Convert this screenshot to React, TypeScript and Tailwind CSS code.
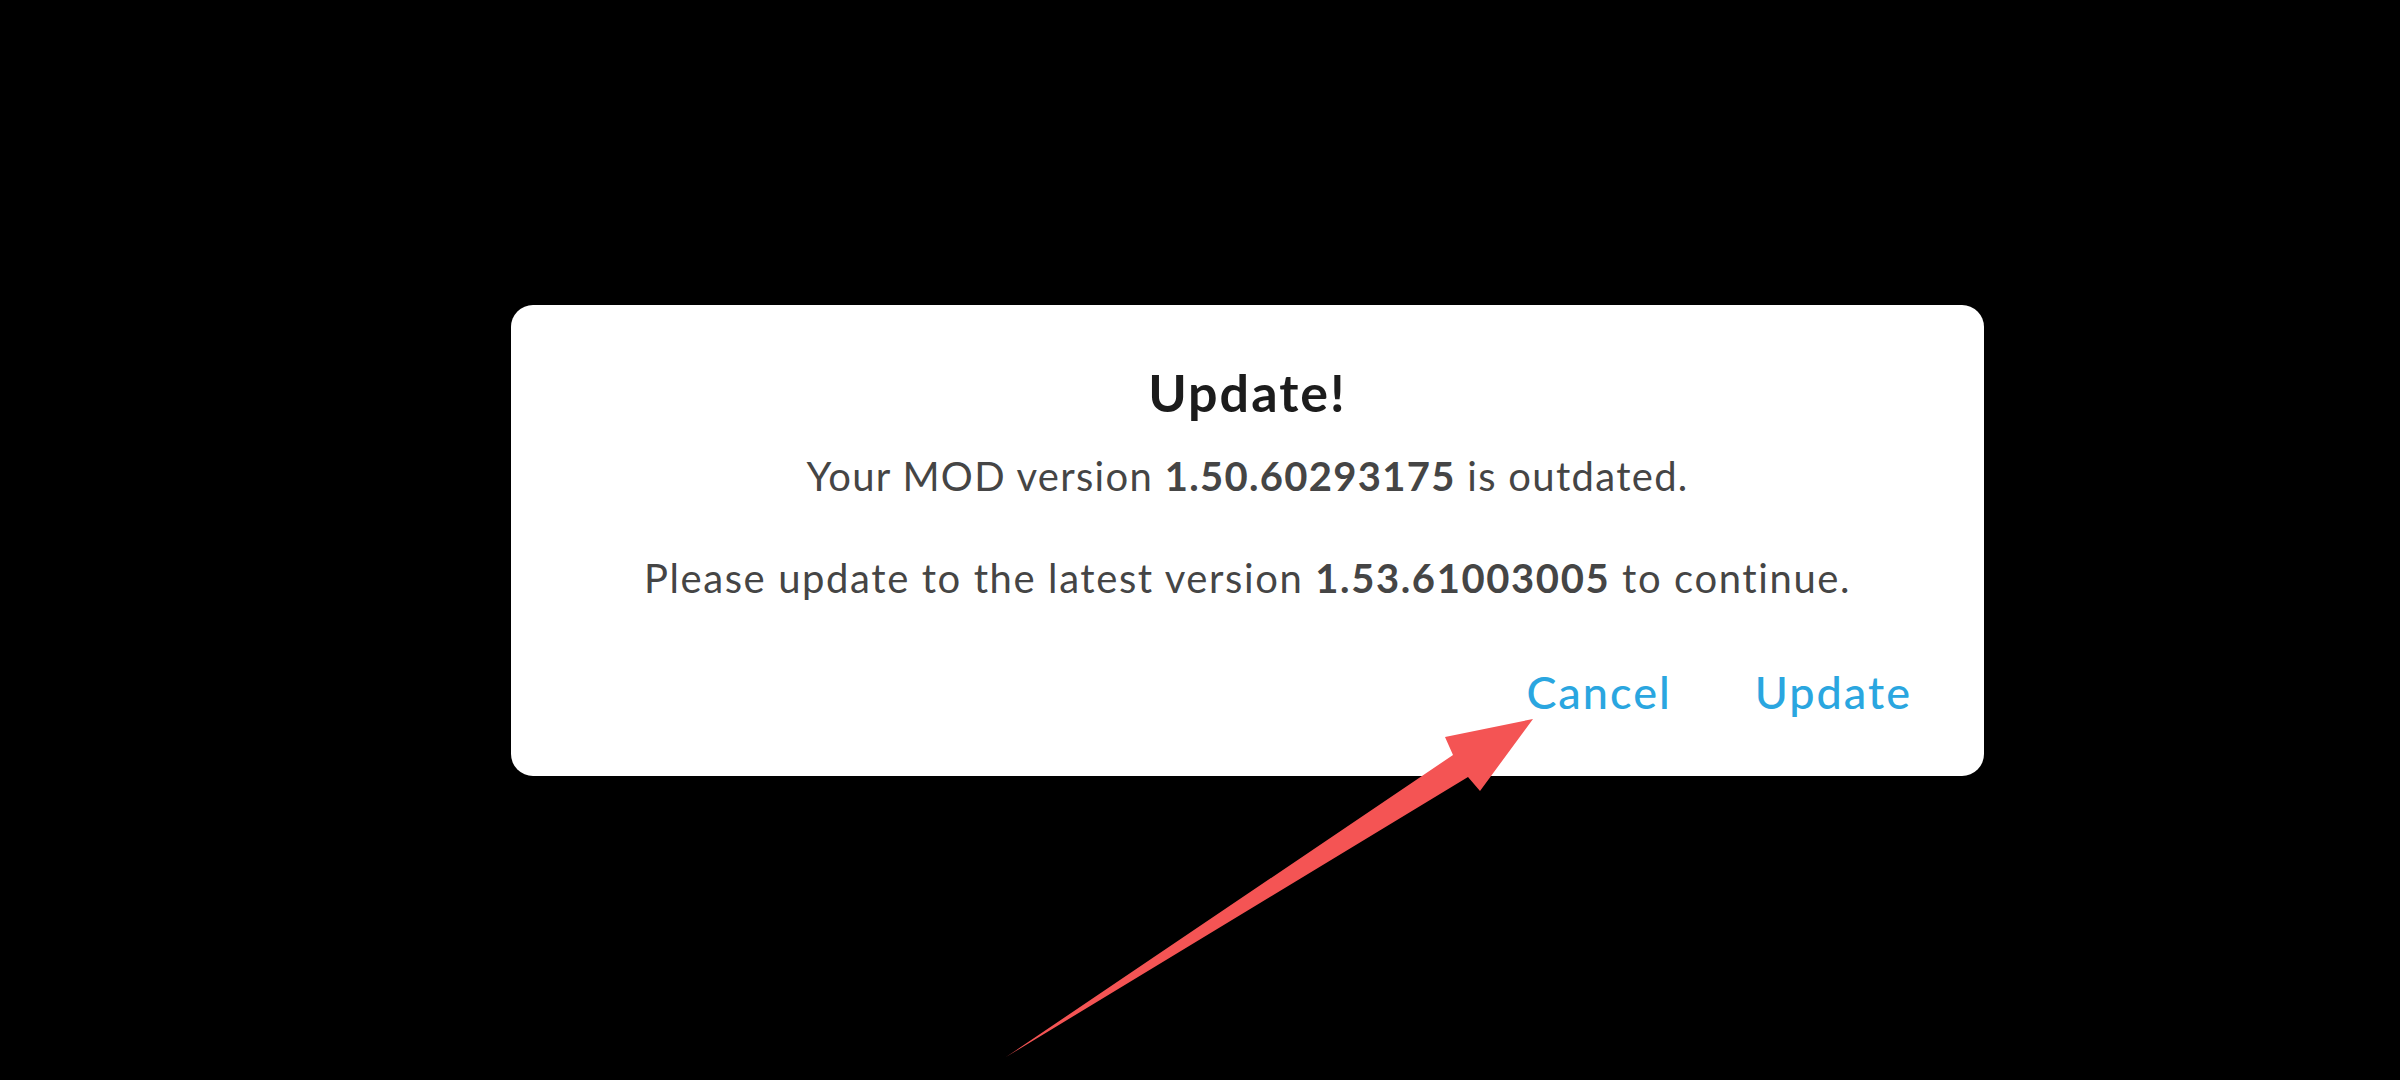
export default function App() {
  return (
    <div className="relative w-[2400px] h-[1080px] bg-black overflow-hidden" style={{ fontFamily: "Lato, 'Noto Sans', sans-serif" }}>
      <div className="flex h-full items-center justify-center pl-[95px]">
        <UpdateDialog />
      </div>
      <ArrowMark />
    </div>
  );
}

function UpdateDialog() {
  return (
    <div className="w-[1473px] h-[471px] rounded-[22px] bg-white flex flex-col items-center pt-[61px]">
      <h2 className="text-[52px] leading-[52px] font-bold tracking-[2px] text-[#1c1c1c]">Update!</h2>
      <p className="mt-[38px] text-[40px] leading-[40px] tracking-[1.3px] text-[#454545]">
        Your MOD version <span className="font-bold">1.50.60293175</span> is outdated.
      </p>
      <p className="mt-[62px] text-[40px] leading-[40px] tracking-[1.6px] text-[#454545]">
        Please update to the latest version <span className="font-bold">1.53.61003005</span> to continue.
      </p>
      <div className="mt-[72px] w-full flex justify-end gap-[83px] pr-[72px]">
        <button className="text-[45px] leading-[44px] font-medium tracking-[2px] text-[#2aa6e0]">Cancel</button>
        <button className="text-[45px] leading-[44px] font-medium tracking-[2px] text-[#2aa6e0]">Update</button>
      </div>
    </div>
  );
}

function ArrowMark() {
  return (
    <svg className="absolute inset-0 pointer-events-none" width="2400" height="1080" viewBox="0 0 2400 1080">
      <polygon
        points="1006,1057 1453,755 1445,737 1533,719 1480,791 1468,777"
        fill="#f45454"
      />
    </svg>
  );
}
